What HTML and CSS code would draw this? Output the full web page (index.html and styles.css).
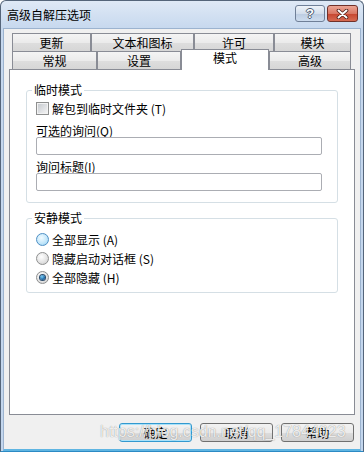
FILE: index.html
```html
<!DOCTYPE html>
<html lang="zh-CN">
<head>
<meta charset="utf-8">
<title>高级自解压选项</title>
<link rel="stylesheet" href="styles.css">
</head>
<body>
<div class="window">
  <div class="titlebar">
    <span class="title">高级自解压选项</span>
    <div class="caption-buttons">
      <span class="cbtn help">?</span>
      <span class="cbtn close">
        <svg width="13" height="10" viewBox="0 0 13 10">
          <path d="M2.5 1.5 L10.5 8.5 M10.5 1.5 L2.5 8.5" stroke="#4a1a14" stroke-width="3.6" stroke-linecap="round"/>
          <path d="M2.5 1.5 L10.5 8.5 M10.5 1.5 L2.5 8.5" stroke="#ffffff" stroke-width="2" stroke-linecap="round"/>
        </svg>
      </span>
    </div>
  </div>
  <div class="client">
    <div class="tabs">
      <div class="tab-row">
        <div class="tab t-update">更新</div>
        <div class="tab t-text">文本和图标</div>
        <div class="tab t-license">许可</div>
        <div class="tab t-module">模块</div>
      </div>
      <div class="tab-row">
        <div class="tab t-general">常规</div>
        <div class="tab t-setup">设置</div>
        <div class="tab t-mode selected">模式</div>
        <div class="tab t-advanced">高级</div>
      </div>
    </div>
    <div class="panel">
      <fieldset class="group">
        <legend>临时模式</legend>
        <div class="group-body">
          <label class="check-row"><span class="checkbox"></span>解包到临时文件夹 (T)</label>
          <div class="field-label first">可选的询问(Q)</div>
          <input class="textbox" type="text">
          <div class="field-label">询问标题(I)</div>
          <input class="textbox" type="text">
        </div>
      </fieldset>
      <fieldset class="group silent">
        <legend>安静模式</legend>
        <div class="group-body radios">
          <label class="radio-row"><span class="radio hover"></span>全部显示 (A)</label>
          <label class="radio-row"><span class="radio"></span>隐藏启动对话框 (S)</label>
          <label class="radio-row"><span class="radio checked"></span>全部隐藏 (H)</label>
        </div>
      </fieldset>
    </div>
    <div class="buttons">
      <button class="btn default">确定</button>
      <button class="btn">取消</button>
      <button class="btn">帮助</button>
    </div>
    <div class="watermark">https://blog.csdn.net/qq_17844023</div>
  </div>
</div>
</body>
</html>
```
FILE: styles.css
```css
html, body {
  margin: 0;
  padding: 0;
  background: #ffffff;
}

body {
  font-family: "Noto Sans CJK SC", "Noto Sans", sans-serif;
  font-size: 12px;
  color: #000;
}

.window {
  width: 364px;
  height: 452px;
  box-sizing: border-box;
  border: 1px solid #55657a;
  border-bottom: 1px solid #2c8ac4;
  border-radius: 6px 6px 0 0;
  background: linear-gradient(#dfe9f6, #c6d8ee 28px, #c3d6ed);
  display: flex;
  flex-direction: column;
}

.titlebar {
  height: 27px;
  display: flex;
  align-items: flex-start;
  padding: 0 5px 0 6px;
}

.title {
  flex: 1;
  margin-top: 7px;
  line-height: 14px;
  color: #000;
}

.caption-buttons {
  display: flex;
  gap: 2px;
  margin-top: 4px;
}

.cbtn {
  width: 30px;
  height: 17px;
  box-sizing: border-box;
  border: 1px solid #6f7f97;
  border-radius: 3px;
  display: flex;
  align-items: center;
  justify-content: center;
}

.help {
  background: linear-gradient(#eef3f9, #d3deec 50%, #bccce1 51%, #cddcee);
  font-family: "Liberation Sans", sans-serif;
  font-weight: bold;
  font-size: 13px;
  color: #ffffff;
  text-shadow: 1px 0 0 #4b5a70, -1px 0 0 #4b5a70, 0 1px 0 #4b5a70, 0 -1px 0 #4b5a70;
  line-height: 15px;
}

.close {
  width: 31px;
  border-color: #70312a;
  background: linear-gradient(#eba595, #d97764 50%, #c6452f 51%, #d66a52);
}

.client {
  flex: 1;
  margin: 0 2px 0 2px;
  border: 1px solid #9cb3cf;
  border-bottom: 2px solid #5fb5e2;
  background: #f0f0f0;
  display: flex;
  flex-direction: column;
  padding: 4px 5px 0 5px;
  position: relative;
}

.tabs {
  padding: 0 4px 0 3px;
}

.tab-row {
  display: flex;
  height: 18px;
}

.tab {
  box-sizing: border-box;
  height: 18px;
  border: 1px solid #898c95;
  border-bottom: none;
  text-align: center;
  line-height: 17px;
  background: linear-gradient(#f4f4f4, #ebebeb 50%, #dedede 51%, #d6d6d6);
}

.t-update { width: 79px; }
.t-text { width: 103px; }
.t-license { width: 80px; }
.t-module { width: 77px; }
.t-general { width: 85px; }
.t-setup { width: 84px; }
.t-mode { width: 88px; }
.t-advanced { width: 82px; }

.tab.selected {
  height: 21px;
  margin-top: -2px;
  background: #ffffff;
  line-height: 15px;
  position: relative;
  z-index: 1;
}

.panel {
  height: 346px;
  box-sizing: border-box;
  border: 1px solid #898c95;
  background: #ffffff;
  padding: 13px 16px 0 16px;
}

.group {
  margin: 0;
  padding: 0;
  border: 1px solid #d5dfe5;
  border-radius: 3px;
  min-width: 0;
}

.group legend {
  margin-left: 5px;
  padding: 0 2px;
  line-height: 14px;
}

.group-body {
  padding: 0 15px 11px 9px;
  display: flex;
  flex-direction: column;
}

.group.silent {
  margin-top: 8px;
}

.group-body.radios {
  padding-top: 5px;
  padding-bottom: 5px;
}

.check-row,
.radio-row {
  display: flex;
  align-items: center;
  gap: 3px;
}

.check-row {
  margin-top: 4px;
  height: 14px;
}

.radio-row {
  height: 19px;
}

.checkbox {
  width: 13px;
  height: 13px;
  box-sizing: border-box;
  border: 1px solid #8e8f8f;
  background: linear-gradient(135deg, #c3c7cc, #e7e8ea 70%, #f6f6f6);
  box-shadow: inset 0 0 0 1px #f2f2f2;
  flex: none;
}

.field-label {
  margin-top: 6px;
  line-height: 12px;
}

.field-label.first {
  margin-top: 10px;
}

.textbox {
  display: block;
  width: 100%;
  height: 18px;
  box-sizing: border-box;
  margin: 0;
  border: 1px solid #abadb3;
  border-radius: 2px;
  background: #fff;
  padding: 0 3px;
  font: inherit;
}

.radio {
  width: 13px;
  height: 13px;
  box-sizing: border-box;
  border-radius: 50%;
  border: 1px solid #8e8f8f;
  background: radial-gradient(circle at 40% 35%, #ffffff, #e4e4e4 55%, #c7c7c7);
  display: flex;
  align-items: center;
  justify-content: center;
  flex: none;
}

.radio.hover {
  border-color: #4f8fc4;
  background: radial-gradient(circle at 40% 35%, #f2fbff, #bfe5fa 60%, #8ccbee);
}

.radio.checked::after {
  content: "";
  width: 5px;
  height: 5px;
  border-radius: 50%;
  background: radial-gradient(circle at 40% 35%, #7fd0f6, #1d6aa8 60%, #0d355f);
  box-shadow: 0 0 0 1px #2a4a6a;
}

.buttons {
  display: flex;
  justify-content: flex-end;
  gap: 8px;
  margin-top: 8px;
  padding-right: 1px;
}

.btn {
  width: 73px;
  height: 19px;
  box-sizing: border-box;
  margin: 0;
  padding: 0;
  border: 1px solid #707070;
  border-radius: 3px;
  background: linear-gradient(#f2f2f2, #ebebeb 50%, #dddddd 51%, #cfcfcf);
  font: inherit;
  line-height: 16px;
  color: #000;
}

.btn.default {
  border-color: #3399cf;
  box-shadow: inset 0 0 0 1px #a9e2fa;
}

.watermark {
  position: absolute;
  left: 96px;
  top: 393px;
  font-family: "Liberation Sans", sans-serif;
  font-size: 16px;
  line-height: 20px;
  color: rgba(255, 255, 255, 0.85);
  text-shadow: 0 0 1px rgba(0, 0, 0, 0.45);
  pointer-events: none;
  white-space: nowrap;
}
```
